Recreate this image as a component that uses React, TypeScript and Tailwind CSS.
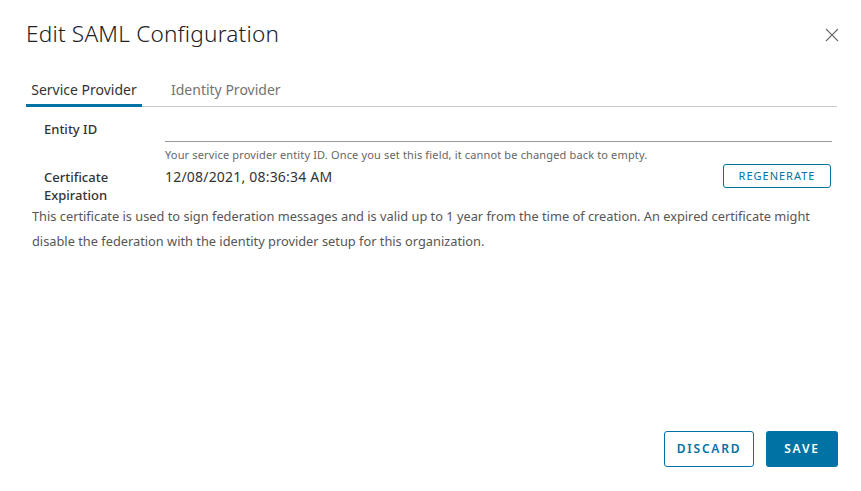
import React from "react";

export default function App() {
  return (
    <div className="w-[861px] h-[491px] bg-white relative" style={{ fontFamily: "'Noto Sans', 'Liberation Sans', sans-serif" }}>
      <div className="flex flex-col h-full pl-[26px] pr-[23px]">
        <div className="flex items-center justify-between pt-[20px] h-[50px]">
          <h1 className="text-[22.6px] font-light text-[#222] leading-[30px] tracking-[0.2px] mt-[-2px]">Edit SAML Configuration</h1>
          <button className="text-[#6b6b6b] w-[16px] h-[16px] mr-[-2px]" aria-label="close">
            <svg viewBox="0 0 16 16" width="16" height="16" fill="none" stroke="currentColor" strokeWidth="1.1">
              <path d="M2 2 L14 14 M14 2 L2 14" />
            </svg>
          </button>
        </div>
        <div className="mt-[27px] flex border-b border-[#cccccc] mr-[1px] h-[30px] items-start">
          <div className="px-[3px] w-[116px] h-[30px] border-b-[3px] border-[#0072a3] text-[14px] leading-[18px] text-[#333] pt-[4px] text-center">Service Provider</div>
          <div className="ml-[29px] text-[14px] leading-[18px] text-[#737373] pt-[4px]">Identity Provider</div>
        </div>
        <div className="flex mt-[13px]">
          <div className="w-[139px] pl-[18px] text-[13px] font-medium text-[#333] leading-[18px]">Entity ID</div>
          <div className="flex-1 pr-[6px]">
            <div className="h-[22px] border-b border-[#9a9a9a]"></div>
          </div>
        </div>
        <div className="pl-[139px] mt-[6px] text-[11px] tracking-[0.15px] text-[#666] leading-[14px]">Your service provider entity ID. Once you set this field, it cannot be changed back to empty.</div>
        <div className="flex mt-[2px] pr-[7px]">
          <div className="w-[139px] pl-[18px] text-[13px] font-medium text-[#333] leading-[18px] pt-[4px]">Certificate<br />Expiration</div>
          <div className="flex-1 text-[14px] text-[#333] leading-[18px] pt-[4px] tracking-[0.2px]">12/08/2021, 08:36:34 AM</div>
          <button className="h-[24px] w-[108px] border border-[#0072a3] rounded-[3px] text-[#0072a3] text-[11px] tracking-[1px] leading-[22px]">REGENERATE</button>
        </div>
        <p className="pl-[6px] mt-[0px] text-[12.8px] leading-[25px] text-[#565656]">This certificate is used to sign federation messages and is valid up to 1 year from the time of creation. An expired certificate might disable the federation with the identity provider setup for this organization.</p>
        <div className="flex-1"></div>
        <div className="flex justify-end gap-[12px] pb-[24px]">
          <button className="h-[36px] w-[90px] border border-[#0072a3] rounded-[3px] text-[#0072a3] text-[12px] font-semibold tracking-[1.8px]">DISCARD</button>
          <button className="h-[36px] w-[72px] bg-[#0072a3] rounded-[3px] text-white text-[12px] font-semibold tracking-[1.8px]">SAVE</button>
        </div>
      </div>
    </div>
  );
}
